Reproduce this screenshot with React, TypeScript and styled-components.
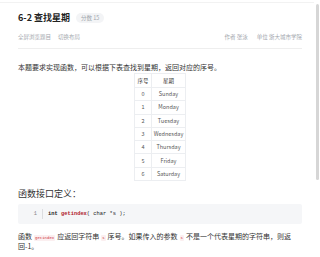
import React from "react";
import styled, { createGlobalStyle } from "styled-components";

const Global = createGlobalStyle`
  html, body { margin: 0; padding: 0; background: #fff; }
  body { font-family: "Noto Sans CJK SC", "Noto Sans", sans-serif; color: #333; }
`;

const Page = styled.div`
  position: relative;
  width: 320px;
  height: 257px;
  overflow: hidden;
  box-sizing: border-box;
  padding-top: 2px;
`;

const TopLine = styled.div`
  border-top: 1px solid #f2f2f2;
  margin-right: 6px;
`;

const Content = styled.div`
  padding: 0 18px;
`;

const Header = styled.header`
  padding-top: 8px;
  padding-bottom: 6px;
  border-bottom: 1px solid #eeeeee;
`;

const TitleRow = styled.div`
  display: flex;
  align-items: center;
  gap: 6px;
  height: 14px;
`;

const Title = styled.h1`
  margin: 0;
  font-size: 9px;
  font-weight: 700;
  color: #222;
  line-height: 14px;
`;

const Tag = styled.span`
  display: inline-flex;
  align-items: center;
  height: 10px;
  padding: 0 5px;
  border-radius: 5px;
  background: #f3f4f6;
  color: #a0a4ab;
  font-size: 5.5px;
`;

const MetaRow = styled.div`
  display: flex;
  justify-content: space-between;
  align-items: center;
  margin-top: 8px;
  font-size: 5.5px;
  line-height: 9px;
  color: #a3a7ae;
`;

const MetaGroup = styled.div<{ $gap: number }>`
  display: flex;
  gap: ${(p) => p.$gap}px;
`;

const Para = styled.p<{ $mt: number }>`
  margin: ${(p) => p.$mt}px 0 0;
  font-size: 7px;
  line-height: 10px;
  color: #333;
`;

const Table = styled.table`
  margin: 1px auto 0;
  border-collapse: collapse;
  font-size: 5.5px;
  color: #555;
`;

const Th = styled.th<{ $w: number }>`
  width: ${(p) => p.$w}px;
  height: 13px;
  border: 1px solid #eceef1;
  font-weight: 400;
  color: #333;
  padding: 0;
  text-align: center;
`;

const Td = styled.td`
  height: 12.3px;
  border: 1px solid #eceef1;
  padding: 0;
  text-align: center;
`;

const Heading = styled.h2`
  margin: 7px 0 0;
  font-size: 9px;
  font-weight: 400;
  line-height: 12px;
  color: #333;
`;

const CodeBlock = styled.div`
  margin-top: 4px;
  height: 20px;
  background: #f5f6f8;
  border-radius: 2px;
  display: flex;
  align-items: center;
  font-family: "Liberation Mono", "DejaVu Sans Mono", monospace;
  font-size: 5.4px;
`;

const LineNo = styled.span`
  width: 19px;
  padding-right: 5px;
  text-align: right;
  color: #888;
  border-right: 1px solid #dcdde0;
  line-height: 10px;
`;

const Code = styled.code`
  padding-left: 5px;
  color: #222;
  white-space: pre;
  font-family: inherit;
`;

const Kw = styled.span<{ $red?: boolean }>`
  font-weight: 700;
  color: ${(p) => (p.$red ? "#b0212b" : "#222")};
`;

const InlineCode = styled.code`
  font-family: "Liberation Mono", "DejaVu Sans Mono", monospace;
  font-size: 4px;
  line-height: 6px;
  color: #d0343c;
  background: #fbeff0;
  padding: 1px 1px;
  border-radius: 1px;
  margin: 0 2px;
`;

const Thumb = styled.div`
  position: absolute;
  right: 1px;
  top: 4px;
  width: 3px;
  height: 176px;
  border-radius: 2px;
  background: #d6d6d6;
`;

const days = ["Sunday", "Monday", "Tuesday", "Wednesday", "Thursday", "Friday", "Saturday"];

export default function App() {
  return (
    <>
      <Global />
      <Page>
        <TopLine />
        <Content>
          <Header>
            <TitleRow>
              <Title>6-2 查找星期</Title>
              <Tag>分数 15</Tag>
            </TitleRow>
            <MetaRow>
              <MetaGroup $gap={7}>
                <span>全屏浏览题目</span>
                <span>切换布局</span>
              </MetaGroup>
              <MetaGroup $gap={9}>
                <span>作者 张泳</span>
                <span>单位 浙大城市学院</span>
              </MetaGroup>
            </MetaRow>
          </Header>
          <Para $mt={13}>本题要求实现函数，可以根据下表查找到星期，返回对应的序号。</Para>
          <Table>
            <thead>
              <tr>
                <Th $w={16}>序号</Th>
                <Th $w={33}>星期</Th>
              </tr>
            </thead>
            <tbody>
              {days.map((d, i) => (
                <tr key={d}>
                  <Td>{i}</Td>
                  <Td>{d}</Td>
                </tr>
              ))}
            </tbody>
          </Table>
          <Heading>函数接口定义：</Heading>
          <CodeBlock>
            <LineNo>1</LineNo>
            <Code>
              <Kw>int</Kw> <Kw $red>getindex</Kw>( char *s );
            </Code>
          </CodeBlock>
          <Para $mt={7}>
            函数<InlineCode>getindex</InlineCode>应返回字符串<InlineCode>s</InlineCode>序号。如果传入的参数<InlineCode>s</InlineCode>不是一个代表星期的字符串，则返
            <br />
            回-1。
          </Para>
        </Content>
        <Thumb />
      </Page>
    </>
  );
}
